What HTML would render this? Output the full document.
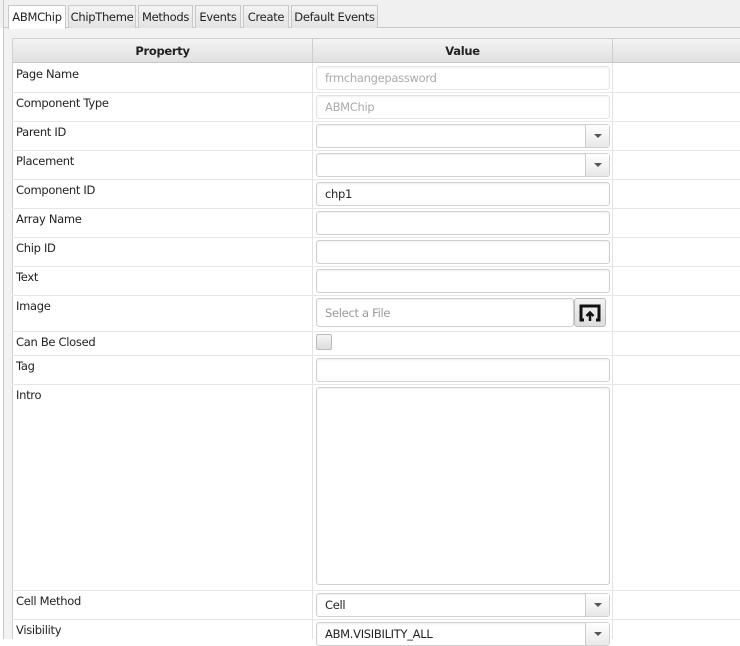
<!DOCTYPE html><html><head><style>
*{box-sizing:border-box;margin:0;padding:0}
body{width:740px;height:639px;overflow:hidden;background:#fff;font-family:"DejaVu Sans","Liberation Sans",sans-serif;font-size:11.5px;color:#222;position:relative;letter-spacing:-0.3px}
.a{position:absolute}
.tab{position:absolute;top:5px;height:23px;border:1px solid #c8c8c8;border-bottom:none;background:linear-gradient(#f4f4f4,#e2e2e2);padding:4px 0 0;text-align:center;color:#222}
.lbl{position:absolute;left:16px}
.in{position:absolute;left:316px;width:294px;height:24px;border:1px solid #d0d0d0;border-radius:3px;background:#fff;padding:4px 8px;box-shadow:inset 0 1px 2px #eee}
.dd:after{content:"";position:absolute;right:0;top:0;width:23px;height:22px;border-left:1px solid #ccc;background:linear-gradient(#fff,#e8e8e8)}
.dd:before{content:"";position:absolute;right:7px;top:9px;border:4px solid transparent;border-top:4px solid #555;z-index:2}
.hl{position:absolute;left:12px;width:728px;height:1px;background:#e6e6e6}
</style></head><body>
<div class="a" style="left:0;top:0;width:740px;height:28px;background:#f0f0f0"></div>
<div class="a" style="left:3px;top:0;width:1px;height:639px;background:#c8c8c8"></div>
<div class="a" style="left:3px;top:27px;width:737px;height:1px;background:#c8c8c8"></div>
<div class="a" style="left:4px;top:28px;width:736px;height:611px;background:#f2f2f2"></div>
<div class="tab" style="left:8px;width:58px;background:#fff;height:24px">ABMChip</div>
<div class="tab" style="left:68px;width:68px">ChipTheme</div>
<div class="tab" style="left:138px;width:55px">Methods</div>
<div class="tab" style="left:195px;width:46px">Events</div>
<div class="tab" style="left:243px;width:46px">Create</div>
<div class="tab" style="left:291px;width:87px">Default Events</div>
<div class="a" style="left:12px;top:38px;width:728px;height:601px;background:#fff;border-left:1px solid #d0d0d0;border-top:1px solid #d0d0d0"></div>
<div class="a" style="left:13px;top:39px;width:727px;height:24px;background:linear-gradient(#f4f4f4,#e0e0e0);border-bottom:1px solid #c8c8c8"></div>
<div class="a" style="left:312px;top:39px;width:1px;height:600px;background:#e3e3e3"></div>
<div class="a" style="left:612px;top:39px;width:1px;height:600px;background:#e3e3e3"></div>
<div class="a" style="left:312px;top:39px;width:1px;height:24px;background:#ccc"></div>
<div class="a" style="left:612px;top:39px;width:1px;height:24px;background:#ccc"></div>
<div class="a" style="left:13px;top:44px;width:299px;text-align:center;font-weight:bold">Property</div>
<div class="a" style="left:313px;top:44px;width:299px;text-align:center;font-weight:bold">Value</div>
<div class="hl" style="top:92px"></div><div class="hl" style="top:121px"></div><div class="hl" style="top:150px"></div><div class="hl" style="top:179px"></div><div class="hl" style="top:208px"></div><div class="hl" style="top:237px"></div><div class="hl" style="top:266px"></div><div class="hl" style="top:295px"></div><div class="hl" style="top:331px"></div><div class="hl" style="top:355px"></div><div class="hl" style="top:384px"></div><div class="hl" style="top:590px"></div><div class="hl" style="top:619px"></div>
<div class="lbl" style="top:67px">Page Name</div>
<div class="lbl" style="top:96px">Component Type</div>
<div class="lbl" style="top:125px">Parent ID</div>
<div class="lbl" style="top:154px">Placement</div>
<div class="lbl" style="top:183px">Component ID</div>
<div class="lbl" style="top:212px">Array Name</div>
<div class="lbl" style="top:241px">Chip ID</div>
<div class="lbl" style="top:270px">Text</div>
<div class="lbl" style="top:299px">Image</div>
<div class="lbl" style="top:335px">Can Be Closed</div>
<div class="lbl" style="top:359px">Tag</div>
<div class="lbl" style="top:388px">Intro</div>
<div class="lbl" style="top:594px">Cell Method</div>
<div class="lbl" style="top:623px">Visibility</div>
<div class="in" style="top:66px;color:#aaa;border-color:#e4e4e4">frmchangepassword</div>
<div class="in" style="top:95px;color:#aaa;border-color:#e4e4e4">ABMChip</div>
<div class="in dd" style="top:124px"></div>
<div class="in dd" style="top:153px"></div>
<div class="in" style="top:182px">chp1</div>
<div class="in" style="top:211px"></div>
<div class="in" style="top:240px"></div>
<div class="in" style="top:269px"></div>
<div class="in" style="top:298px;width:258px;height:29px;padding-top:7px;color:#999">Select a File</div>
<div class="a" style="left:574px;top:298px;width:32px;height:29px;border:1px solid #bbb;border-radius:3px;background:linear-gradient(#f2f2f2,#ddd)"><svg width="30" height="27" viewBox="0 0 30 27"><path d="M9 21H6V7h18v14h-3" fill="none" stroke="#111" stroke-width="3"/><path d="M15 22V14M11.5 17l3.5-3.5 3.5 3.5" fill="none" stroke="#111" stroke-width="2.5"/></svg></div>
<div class="a" style="left:316px;top:334px;width:16px;height:16px;border:1px solid #bbb;border-radius:2px;background:linear-gradient(#f4f4f4,#ddd)"></div>
<div class="in" style="top:358px"></div>
<div class="in" style="top:387px;height:198px"></div>
<div class="in dd" style="top:593px">Cell</div>
<div class="in dd" style="top:622px">ABM.VISIBILITY_ALL</div>
</body></html>
